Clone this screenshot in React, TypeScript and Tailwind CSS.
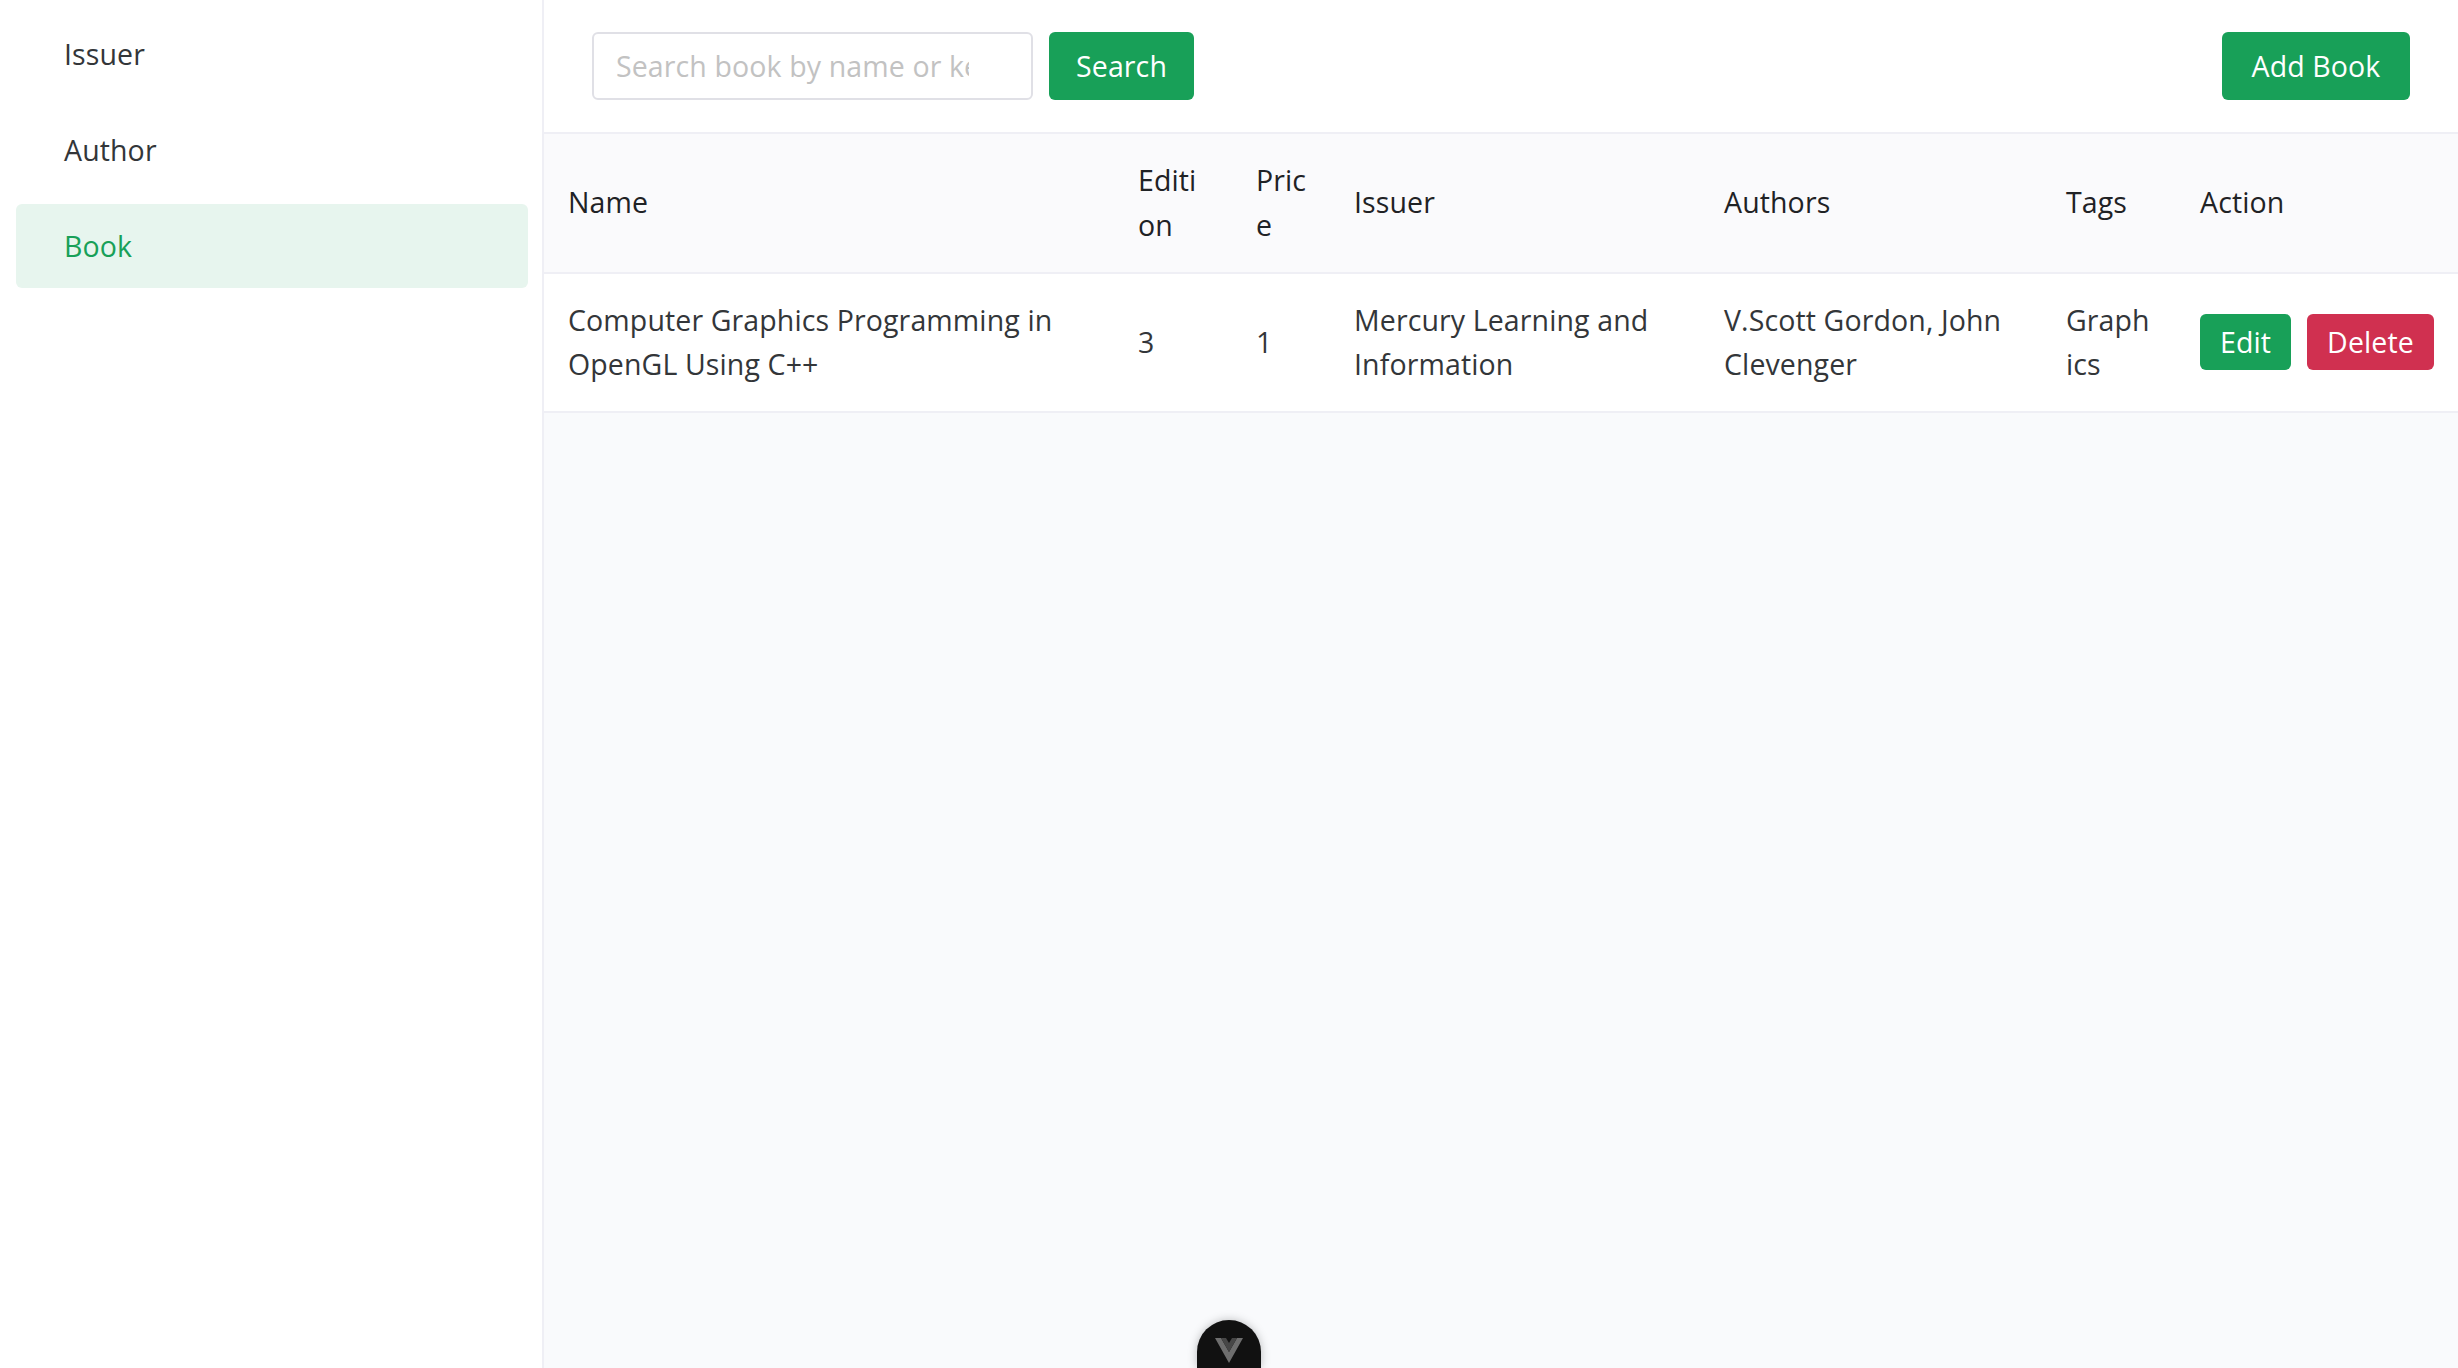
const FONT = "font-['Open_Sans','Noto_Sans',sans-serif]";

const MENU = ["Issuer", "Author", "Book"];

const COLUMNS = [
  { label: "Name", width: "w-[570px] pr-[24px]" },
  { label: "Edition", width: "w-[118px] pr-[24px]" },
  { label: "Price", width: "w-[98px] pr-[16px]" },
  { label: "Issuer", width: "w-[370px] pr-[24px]" },
  { label: "Authors", width: "w-[342px] pr-[24px]" },
  { label: "Tags", width: "w-[134px] pr-[24px]" },
  { label: "Action", width: "w-[282px] pr-[24px]" },
];

const ROW = [
  "Computer Graphics Programming in OpenGL Using C++",
  "3",
  "1",
  "Mercury Learning and Information",
  "V.Scott Gordon, John Clevenger",
  "Graphics",
];

function Button({ label, className }: { label: string; className: string }) {
  return (
    <button className={`flex items-center justify-center rounded-[6px] text-white ${className}`}>
      {label}
    </button>
  );
}

function Sidebar() {
  return (
    <aside className="w-[544px] shrink-0 border-r-2 border-[#efeff5] bg-white pt-[12px]">
      <ul className="flex flex-col gap-[12px] px-[16px]">
        {MENU.map((item) => {
          const active = item === "Book";
          return (
            <li
              key={item}
              className={`flex h-[84px] w-[512px] items-center rounded-[6px] pl-[48px] ${
                active ? "bg-[#e7f5ee] text-[#18a058]" : "text-[#333639]"
              }`}
            >
              {item}
            </li>
          );
        })}
      </ul>
    </aside>
  );
}

function VueBadge() {
  return (
    <div className="absolute bottom-0 left-[1197px] flex h-[48px] w-[64px] justify-center rounded-t-[32px] bg-[#111111] pt-[18px] shadow-[0_0_10px_rgba(0,0,0,0.25)]">
      <svg width="28" height="25" viewBox="0 0 28 25">
        <path d="M0 0h6l8 14 8-14h6L14 25z" fill="#6e6e6e" />
        <path d="M6 0h5l3 5 3-5h5L14 14z" fill="#474747" />
      </svg>
    </div>
  );
}

export default function App() {
  return (
    <div className={`relative flex h-[1368px] w-[2458px] overflow-hidden bg-white text-[28.5px] leading-[44.8px] tracking-[0.12px] text-[#333639] ${FONT}`}>
      <Sidebar />
      <main className="flex min-w-0 flex-1 flex-col bg-[#f9fafc]">
        <header className="flex h-[134px] shrink-0 items-start justify-between border-b-2 border-[#efeff5] bg-white pt-[32px] pr-[48px] pl-[48px]">
          <div className="flex gap-[16px]">
            <input
              placeholder="Search book by name or keyword"
              className="h-[68px] w-[441px] rounded-[6px] border-2 border-[#e0e0e6] bg-white pr-[62px] pl-[22px] outline-none placeholder:text-[#c2c2c2]"
            />
            <Button label="Search" className="h-[68px] w-[145px] bg-[#18a058]" />
          </div>
          <Button label="Add Book" className="h-[68px] w-[188px] bg-[#18a058]" />
        </header>
        <table className="w-[1914px] table-fixed border-separate border-spacing-0">
          <thead>
            <tr className="bg-[#fafafc] text-[#1f2225]">
              {COLUMNS.map((col) => (
                <th
                  key={col.label}
                  className={`${col.width} border-b-2 border-[#efeff5] py-[24px] pl-[24px] text-left font-normal wrap-break-word`}
                >
                  {col.label}
                </th>
              ))}
            </tr>
          </thead>
          <tbody>
            <tr className="bg-white">
              {ROW.map((cell) => (
                <td key={cell} className="border-b-2 border-[#efeff5] p-[24px] wrap-break-word">
                  {cell}
                </td>
              ))}
              <td className="border-b-2 border-[#efeff5] py-[24px] pl-[24px]">
                <div className="flex gap-[16px]">
                  <Button label="Edit" className="h-[56px] w-[91px] bg-[#18a058]" />
                  <Button label="Delete" className="h-[56px] w-[127px] bg-[#d03050]" />
                </div>
              </td>
            </tr>
          </tbody>
        </table>
      </main>
      <VueBadge />
    </div>
  );
}
